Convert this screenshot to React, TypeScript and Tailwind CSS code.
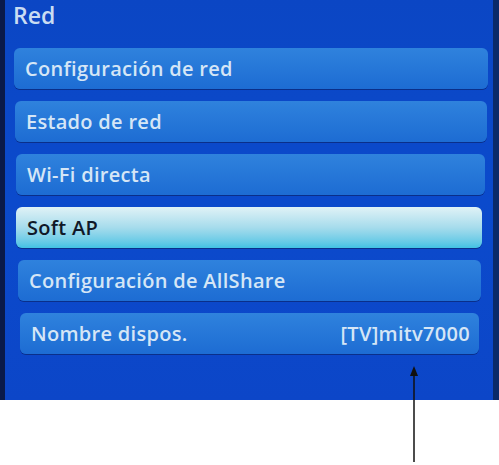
const rows = [
  { label: "Configuración de red", ml: "ml-[9px]", mr: "mr-[5px]" },
  { label: "Estado de red", ml: "ml-[10px]", mr: "mr-[6px]" },
  { label: "Wi-Fi directa", ml: "ml-[11px]", mr: "mr-[8px]" },
  { label: "Soft AP", ml: "ml-[11px]", mr: "mr-[11px]", active: true },
  { label: "Configuración de AllShare", ml: "ml-[13px]", mr: "mr-[12px]" },
  { label: "Nombre dispos.", ml: "ml-[15px]", mr: "mr-[14px]", value: "[TV]mitv7000" },
];

export default function App() {
  return (
    <div className="relative w-[499px] h-[465px] bg-white font-['Open_Sans',sans-serif]">
      <div className="h-[400px] border-l-[5px] border-r-[6px] border-l-[#0a1a4a] border-r-[#0a2a6a] bg-gradient-to-b from-[#0b46c4] via-[#0b4acc] to-[#0c46c8]">
        <div className="pl-[8px] text-[23px] leading-[30px] font-semibold text-[#c9dcf2]">Red</div>
        <div className="mt-[18px] flex flex-col gap-[12px]">
          {rows.map((r) => (
            <div
              key={r.label}
              className={
                r.active
                  ? `${r.ml} ${r.mr} h-[41px] rounded-[6px] flex items-center pl-[11px] pr-[9px] bg-gradient-to-b from-[#e0f2f6] via-[#a6dcec] to-[#40c2e4] shadow-[0_1px_0_#0a2f8a] text-[#101828]`
                  : `${r.ml} ${r.mr} h-[41px] rounded-[6px] flex items-center justify-between pl-[11px] pr-[9px] bg-gradient-to-b from-[#2f82dd] to-[#1d6cd3] shadow-[0_1px_0_#0a2f8a] text-[#d5e6f6]`
              }
            >
              <span className="text-[20px] font-semibold tracking-[0.3px]">{r.label}</span>
              {r.value && <span className="text-[20px] font-semibold tracking-[0.3px]">{r.value}</span>}
            </div>
          ))}
        </div>
      </div>
      <svg className="absolute left-[408px] top-[366px]" width="12" height="97" viewBox="0 0 12 97">
        <path d="M6 0 L10 10 L2 10 Z" fill="#111" />
        <line x1="6" y1="8" x2="6" y2="96" stroke="#111" strokeWidth="1.5" />
      </svg>
    </div>
  );
}
